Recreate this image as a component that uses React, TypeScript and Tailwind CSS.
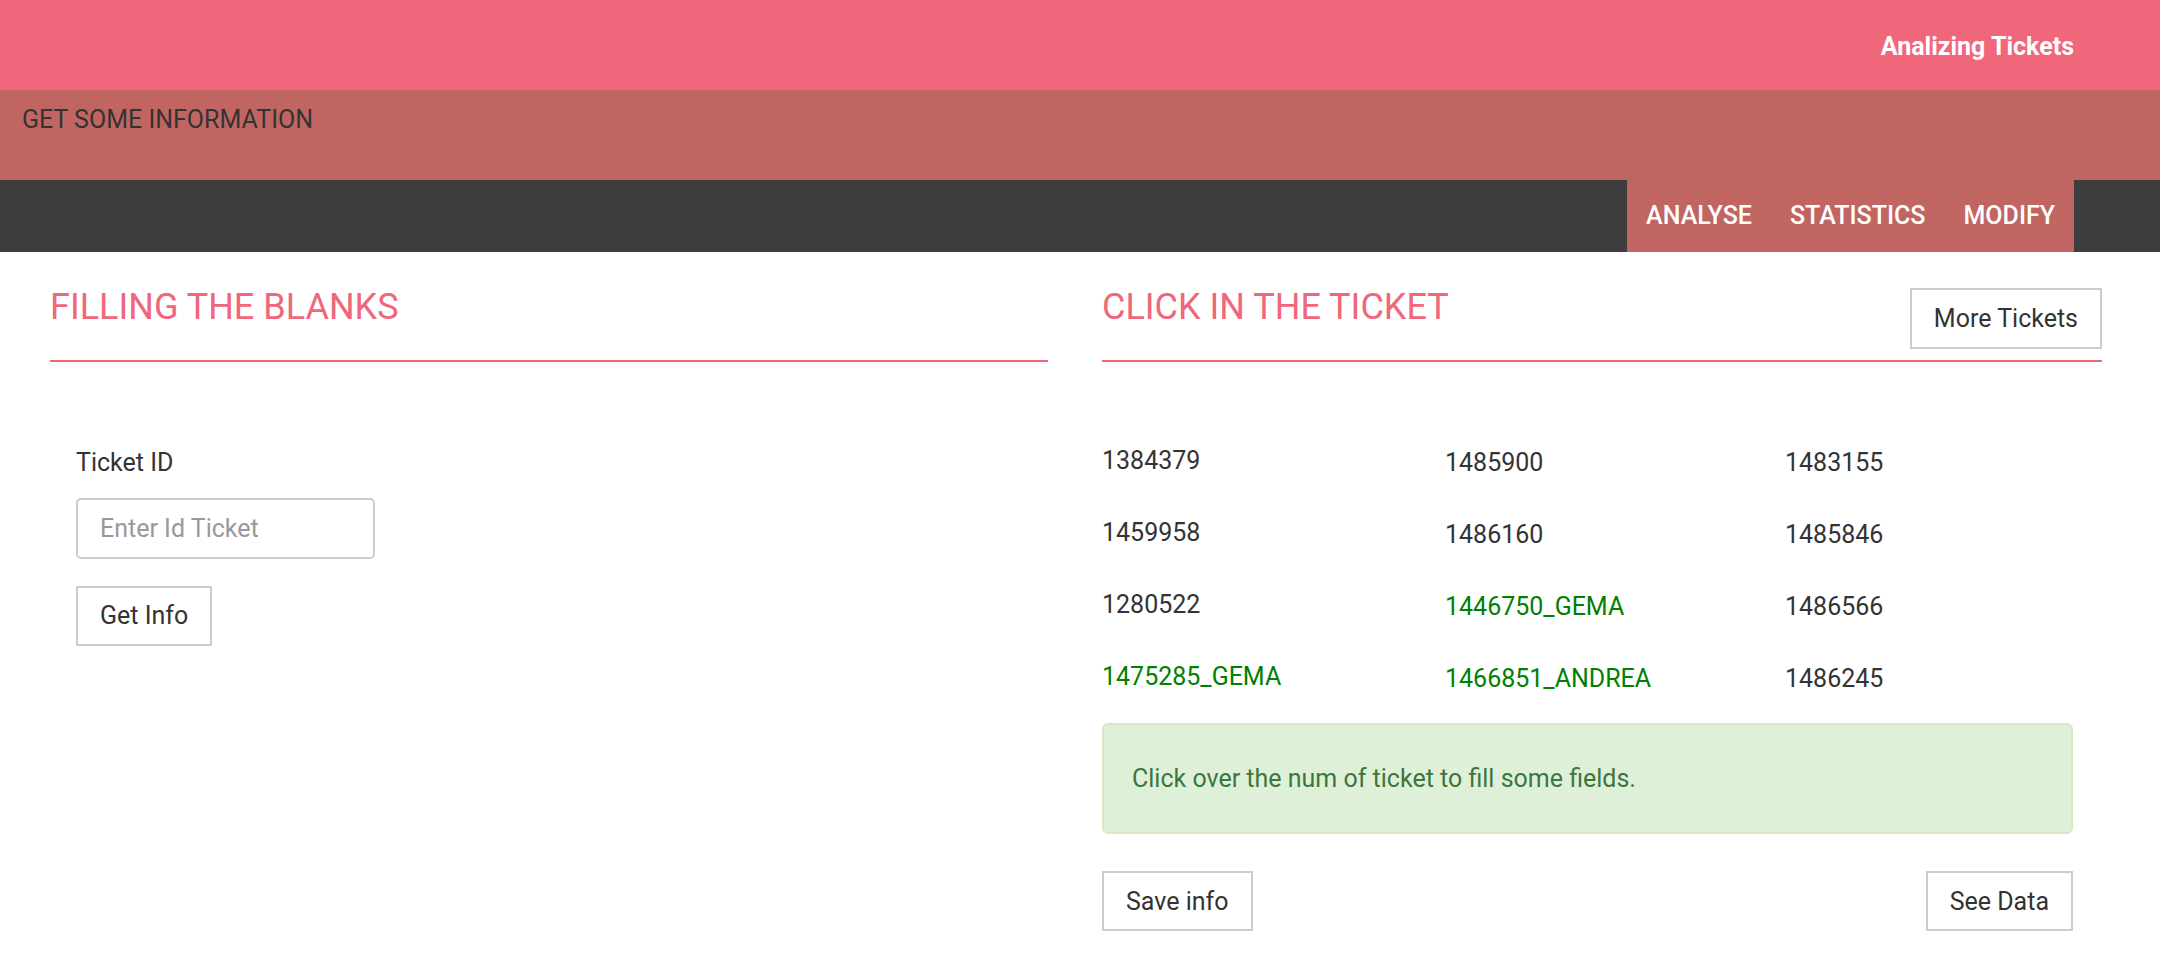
import React from 'react';

const tickets: { id: string; done?: boolean }[] = [
  { id: '1384379' },
  { id: '1485900' },
  { id: '1483155' },
  { id: '1459958' },
  { id: '1486160' },
  { id: '1485846' },
  { id: '1280522' },
  { id: '1446750_GEMA', done: true },
  { id: '1486566' },
  { id: '1475285_GEMA', done: true },
  { id: '1466851_ANDREA', done: true },
  { id: '1486245' },
];

const navItems = ['ANALYSE', 'STATISTICS', 'MODIFY'];

const Button = ({ label }: { label: string }) => (
  <button className="h-[60px] border-2 border-[#cccccc] bg-white px-[22px] text-[25px] leading-none text-[#333333]">
    {label}
  </button>
);

const App = () => {
  return (
    <div className="min-h-[970px] bg-white font-['Roboto',_'Liberation_Sans',_sans-serif] text-[25px] leading-[1.5] text-[#333333]">
      {/* Cabecera */}
      <header>
        <div className="flex h-[90px] items-center justify-end bg-[#f0677b] pr-[86px] pt-[3px]">
          <span className="text-[25px] font-bold text-white">Analizing Tickets</span>
        </div>
        <div className="h-[90px] bg-[#c16563] pl-[22px] pt-[11px]">
          <span>GET SOME INFORMATION</span>
        </div>
        <nav className="flex h-[72px] justify-end bg-[#3d3d3d] pr-[86px]">
          <ul className="flex h-full bg-[#c16563]">
            {navItems.map((item) => (
              <li key={item} className="flex items-center px-[19px] font-medium text-white">
                {item}
              </li>
            ))}
          </ul>
        </nav>
      </header>

      {/* Contenido */}
      <main className="flex pl-[50px] pt-[34px]">
        {/* Columna izquierda */}
        <section className="w-[998px]">
          <div className="h-[76px] border-b-2 border-[#f0677b]">
            <h2 className="text-[36px] leading-[1.2] text-[#f0677b]">FILLING THE BLANKS</h2>
          </div>
          <div className="pl-[26px] pt-[82px]">
            <label className="block">Ticket ID</label>
            <input
              type="text"
              placeholder="Enter Id Ticket"
              className="mt-[16px] block h-[61px] w-[299px] rounded-[5px] border-2 border-[#cccccc] px-[22px] text-[25px] outline-none placeholder:text-[#999999]"
            />
            <div className="mt-[27px]">
              <Button label="Get Info" />
            </div>
          </div>
        </section>

        {/* Columna derecha */}
        <section className="ml-[54px] w-[1000px]">
          <div className="flex h-[76px] items-start justify-between border-b-2 border-[#f0677b]">
            <h2 className="text-[36px] leading-[1.2] text-[#f0677b]">CLICK IN THE TICKET</h2>
            <button className="mt-[2px] h-[61px] border-2 border-[#cccccc] bg-white px-[22px] text-[25px] leading-none text-[#333333]">
              More Tickets
            </button>
          </div>
          <div className="w-[971px]">
            <div className="mt-[80px] grid grid-cols-[343px_340px_1fr] gap-y-[34px]">
              {tickets.map((t, i) => (
                <div
                  key={t.id}
                  className={`h-[38px] cursor-pointer leading-[38px] ${i % 3 === 0 ? '' : 'pt-[2px]'} ${
                    t.done ? 'text-[#008000]' : 'text-[#333333]'
                  }`}
                >
                  {t.id}
                </div>
              ))}
            </div>
            <div className="mt-[27px] flex h-[111px] items-center rounded-[6px] border-2 border-[#d6e9c6] bg-[#dff0d8] px-[28px] text-[#3c763d]">
              Click over the num of ticket to fill some fields.
            </div>
            <div className="mt-[37px] flex justify-between">
              <Button label="Save info" />
              <Button label="See Data" />
            </div>
          </div>
        </section>
      </main>
    </div>
  );
};

export default App;
